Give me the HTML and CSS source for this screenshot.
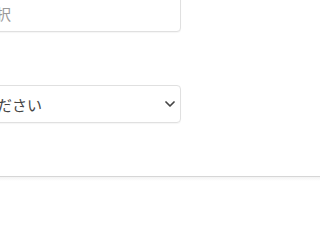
FILE: index.html
```html
<!DOCTYPE html>
<html lang="ja">
<head>
<meta charset="utf-8">
<link rel="stylesheet" href="styles.css">
</head>
<body>
<div class="form">
  <div class="group">
    <input class="control" type="text" placeholder="ファイル選択">
  </div>
  <div class="group">
    <div class="select">
      <span class="select-text">選択してください</span>
      <svg class="chev" width="10" height="6" viewBox="0 0 10 6"><path d="M1 1l4 4 4-4" fill="none" stroke="#444" stroke-width="1.7" stroke-linecap="round" stroke-linejoin="round"/></svg>
    </div>
  </div>
</div>
<div class="footer"></div>
</body>
</html>
```
FILE: styles.css
```css
html, body { margin: 0; padding: 0; background: #fff; }
body { font-family: "Noto Sans CJK JP", "Noto Sans", sans-serif; overflow: hidden; }
.form { margin-left: -90px; margin-top: -6px; width: 271px; display: flex; flex-direction: column; gap: 53px; }
.group { display: block; }
.control {
  box-sizing: border-box; width: 100%; height: 38px; display: block;
  border: 1px solid #e0e0e0; border-radius: 4px; padding: 0 10px;
  font-family: inherit; font-size: 15px; color: #555; background: #fff;
  box-shadow: 0 1px 1px rgba(0,0,0,0.04); outline: none;
}
.control::placeholder { color: #9a9a9a; }
.select {
  box-sizing: border-box; height: 38px; display: flex; align-items: center; justify-content: space-between;
  border: 1px solid #e0e0e0; border-radius: 4px; padding: 0 5px 0 12px;
  font-size: 15px; color: #444; box-shadow: 0 1px 1px rgba(0,0,0,0.04);
}
.select-text { line-height: 1; }
.footer { margin-top: 53px; border-top: 1px solid #d6d6d6; height: 4px; background: linear-gradient(#f3f3f3, #fff); }
```
